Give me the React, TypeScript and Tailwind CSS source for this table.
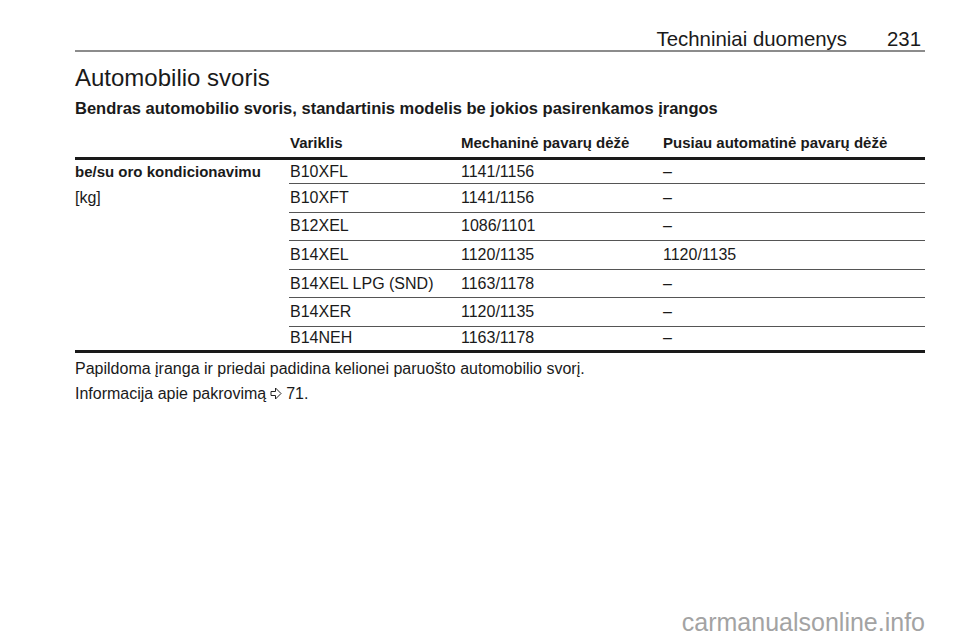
const rows: [string, string, string][] = [
  ["B10XFL", "1141/1156", "–"],
  ["B10XFT", "1141/1156", "–"],
  ["B12XEL", "1086/1101", "–"],
  ["B14XEL", "1120/1135", "1120/1135"],
  ["B14XEL LPG (SND)", "1163/1178", "–"],
  ["B14XER", "1120/1135", "–"],
  ["B14NEH", "1163/1178", "–"],
];

const rowHeights = ["h-[24px]", "h-[28.6px]", "h-[28.6px]", "h-[28.6px]", "h-[28.6px]", "h-[28.6px]", "h-[23px]"];

const RefArrow = () => (
  <svg width="12" height="13" viewBox="0 0 12 13" className="inline-block mx-[4px] -mt-[3px]">
    <path d="M1 4.5 H5.5 V1 L11 6.5 L5.5 12 V8.5 H1 Z" fill="none" stroke="#222" strokeWidth="1" strokeLinejoin="round" />
  </svg>
);

export default function App() {
  return (
    <div className="w-[960px] h-[642px] bg-white text-[#1a1a1a] font-['Liberation_Sans',Arial,sans-serif] flex flex-col overflow-hidden">
      <div className="ml-[75px] w-[850px] pt-[28px]">
        <div className="flex justify-end gap-[40px] pr-[4px] text-[20.4px] leading-[22px] h-[22px] border-b-2 border-[#8c8c8c] box-content">
          <span>Techniniai duomenys</span>
          <span>231</span>
        </div>

        <h1 className="mt-[14px] text-[24px] leading-[24px]">Automobilio svoris</h1>
        <h2 className="mt-[8px] text-[16.5px] leading-[20px] font-bold">
          Bendras automobilio svoris, standartinis modelis be jokios pasirenkamos įrangos
        </h2>

        <div className="mt-[16px]">
          <div className="flex text-[15px] leading-[18px] font-bold pb-[5px] border-b-[3px] border-[#1a1a1a]">
            <div className="w-[215px]" />
            <div className="w-[171px]">Variklis</div>
            <div className="w-[202px]">Mechaninė pavarų dėžė</div>
            <div className="flex-1">Pusiau automatinė pavarų dėžė</div>
          </div>

          <div className="flex text-[16px] leading-[18px] border-b-[3px] border-[#1a1a1a]">
            <div className="w-[214px]">
              <div className="h-[24px] flex items-center font-bold text-[15px]">be/su oro kondicionavimu</div>
              <div className="h-[28.6px] flex items-center">[kg]</div>
            </div>
            <div className="flex-1">
              {rows.map((r, i) => (
                <div
                  key={r[0]}
                  className={`${rowHeights[i]} flex items-center pl-[1px] ${i < rows.length - 1 ? "border-b border-[#555]" : ""}`}
                >
                  <div className="w-[171px]">{r[0]}</div>
                  <div className="w-[202px]">{r[1]}</div>
                  <div className="flex-1">{r[2]}</div>
                </div>
              ))}
            </div>
          </div>

          <div className="mt-[3px] text-[16px] leading-[25.5px]">
            <p>Papildoma įranga ir priedai padidina kelionei paruošto automobilio svorį.</p>
            <p>
              Informacija apie pakrovimą
              <RefArrow />
              71.
            </p>
          </div>
        </div>
      </div>

      <div className="mt-auto mb-[6px] pr-[35px] text-right text-[25px] leading-[28px] text-[#a3a3a3]">
        carmanualsonline.info
      </div>
    </div>
  );
}
